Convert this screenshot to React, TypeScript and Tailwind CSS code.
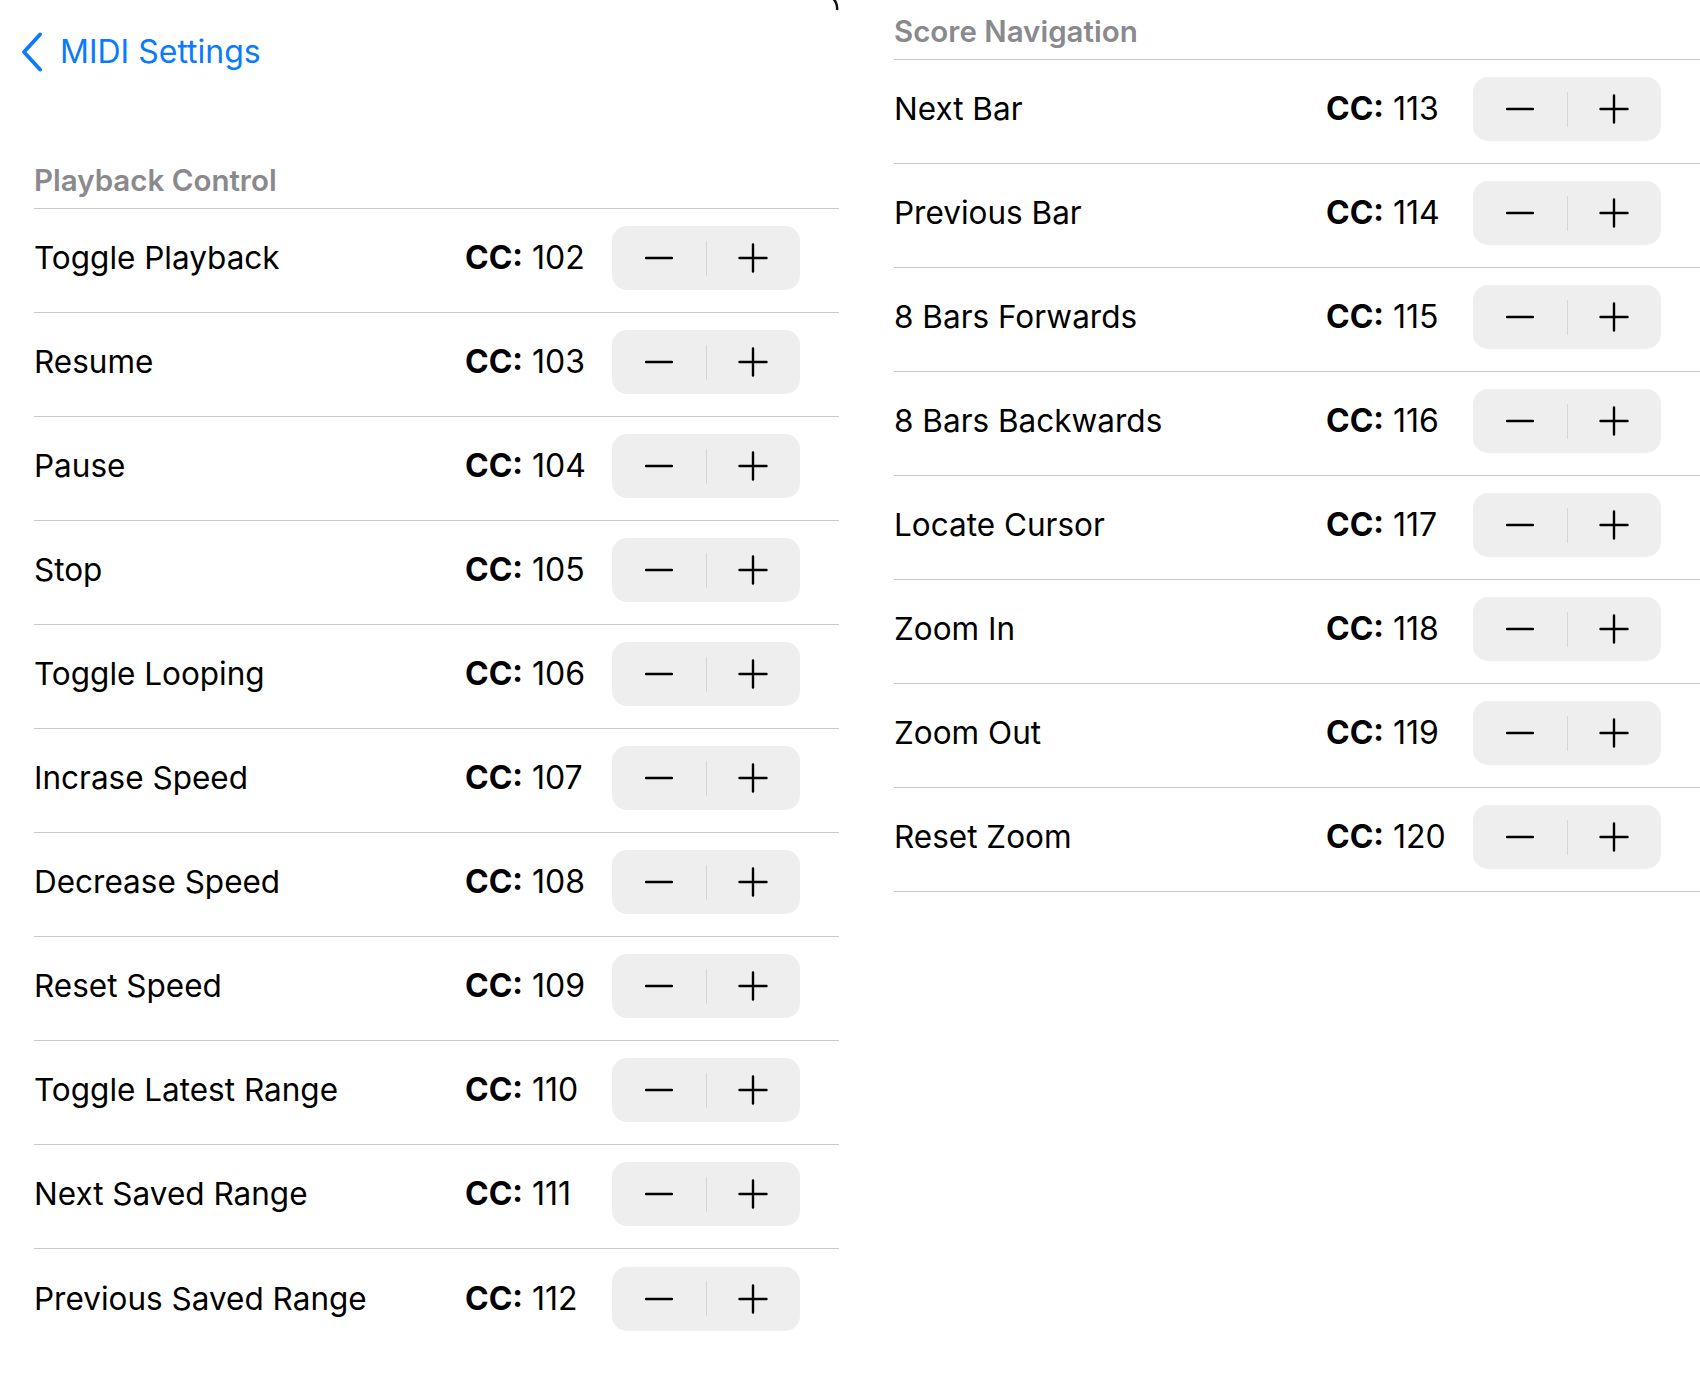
import React from 'react';

type Mapping = { label: string; cc: number };

const playback: Mapping[] = [
  { label: 'Toggle Playback', cc: 102 },
  { label: 'Resume', cc: 103 },
  { label: 'Pause', cc: 104 },
  { label: 'Stop', cc: 105 },
  { label: 'Toggle Looping', cc: 106 },
  { label: 'Incrase Speed', cc: 107 },
  { label: 'Decrease Speed', cc: 108 },
  { label: 'Reset Speed', cc: 109 },
  { label: 'Toggle Latest Range', cc: 110 },
  { label: 'Next Saved Range', cc: 111 },
  { label: 'Previous Saved Range', cc: 112 },
];

const navigation: Mapping[] = [
  { label: 'Next Bar', cc: 113 },
  { label: 'Previous Bar', cc: 114 },
  { label: '8 Bars Forwards', cc: 115 },
  { label: '8 Bars Backwards', cc: 116 },
  { label: 'Locate Cursor', cc: 117 },
  { label: 'Zoom In', cc: 118 },
  { label: 'Zoom Out', cc: 119 },
  { label: 'Reset Zoom', cc: 120 },
];

const Stepper: React.FC = () => (
  <div className="flex items-center w-[188px] h-[64px] rounded-[15px] bg-[#eeeeef] shrink-0">
    <button className="flex-1 h-full flex items-center justify-center">
      <svg width="28" height="28" viewBox="0 0 28 28">
        <path d="M1 14h26" stroke="#000" strokeWidth="2.4" strokeLinecap="round" />
      </svg>
    </button>
    <div className="w-px h-[35px] bg-[#d6d6da]" />
    <button className="flex-1 h-full flex items-center justify-center">
      <svg width="30" height="30" viewBox="0 0 30 30">
        <path d="M1.5 15h27M15 1.5v27" stroke="#000" strokeWidth="2.4" strokeLinecap="round" />
      </svg>
    </button>
  </div>
);

const Row: React.FC<{ item: Mapping; last?: boolean }> = ({ item, last }) => (
  <div className={`flex items-center h-[104px] pb-[5px] pr-[39px] ${last ? '' : 'border-b border-[#c8c8cc]'}`}>
    <span className="flex-1 text-[31.5px] text-black">{item.label}</span>
    <span className="w-[147px] text-[32px] text-black whitespace-nowrap">
      <span className="font-bold">CC:</span> {item.cc}
    </span>
    <Stepper />
  </div>
);

export default function App() {
  return (
    <div
      className="w-[1700px] h-[1400px] bg-white flex overflow-hidden"
      style={{ fontFamily: 'Inter, "Noto Sans", sans-serif' }}
    >
      <div className="relative w-[839px] shrink-0">
        <svg className="absolute top-0 right-0" width="14" height="14" viewBox="0 0 14 14">
          <path d="M4 -4 A 13 13 0 0 1 12 10" fill="none" stroke="#111" strokeWidth="2.5" />
        </svg>
        <div className="h-[104px] flex items-center pl-[20px] gap-[16px] text-[#0a7aff]">
          <svg width="24" height="40" viewBox="0 0 24 40">
            <path d="M20 2.5 L4 20 L20 37.5" fill="none" stroke="#0a7aff" strokeWidth="3.8" strokeLinecap="round" strokeLinejoin="round" />
          </svg>
          <span className="text-[32px] leading-none">MIDI Settings</span>
        </div>
        <div className="ml-[34px]">
          <div className="h-[105px] flex items-end pb-[10px] border-b border-[#c8c8cc]">
            <span className="text-[29.5px] leading-[36px] font-semibold text-[#8a8a8e]">Playback Control</span>
          </div>
          {playback.map((m, i) => (
            <Row key={m.cc} item={m} last={i === playback.length - 1} />
          ))}
        </div>
      </div>
      <div className="flex-1 pl-[55px]">
        <div className="h-[60px] flex items-end pb-[10px] border-b border-[#c8c8cc]">
          <span className="text-[29.5px] leading-[36px] font-semibold text-[#8a8a8e]">Score Navigation</span>
        </div>
        {navigation.map((m) => (
          <Row key={m.cc} item={m} />
        ))}
      </div>
    </div>
  );
}
